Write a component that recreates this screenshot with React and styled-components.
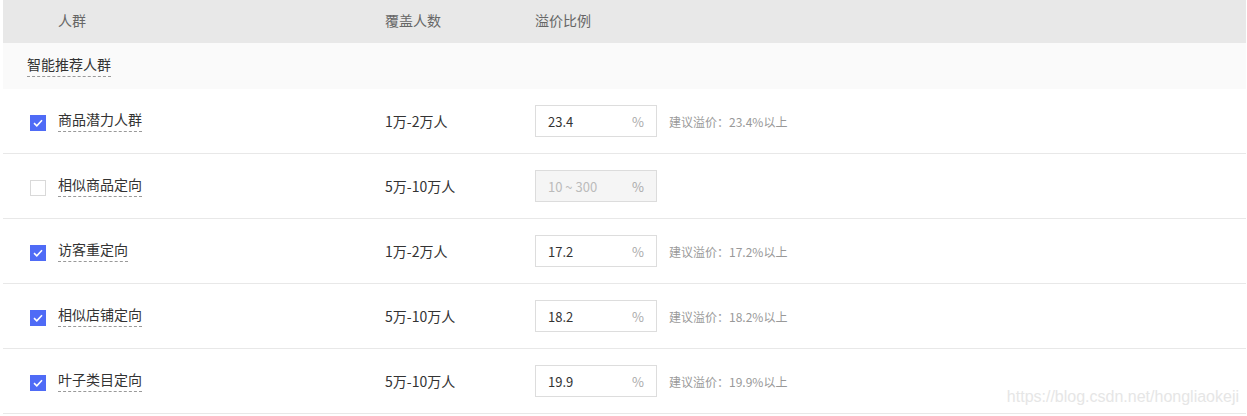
import React from "react";
import styled, { createGlobalStyle } from "styled-components";

const Global = createGlobalStyle`
  html, body { margin: 0; padding: 0; background: #fff; }
  body { font-family: "Noto Sans CJK SC", "Microsoft YaHei", sans-serif; }
`;

const Page = styled.div`
  position: relative;
  width: 1247px;
  height: 416px;
  padding-left: 3px;
  box-sizing: border-box;
  overflow: hidden;
`;

const Table = styled.div`
  width: 1243px;
`;

const cols = "382px 150px 1fr";

const HeaderRow = styled.div`
  display: grid;
  grid-template-columns: ${cols};
  height: 43px;
  align-items: center;
  background: #e8e8e8;
  color: #666;
  font-size: 14px;
`;

const HeadCell = styled.div`
  padding-left: ${(p) => p.$pad || 0}px;
  line-height: 1;
  margin-top: -4px;
`;

const SectionRow = styled.div`
  height: 46px;
  background: #fafafa;
  display: flex;
  align-items: center;
  padding-left: 24px;
`;

const Dashed = styled.span`
  font-size: 14px;
  color: #333;
  line-height: 19px;
  padding-bottom: 2px;
  border-bottom: 1px dashed #999;
`;

const Row = styled.div`
  display: grid;
  grid-template-columns: ${cols};
  height: 64px;
  align-items: center;
  border-bottom: 1px solid #e8e8e8;
  font-size: 14px;
  color: #333;
`;

const NameCell = styled.div`
  display: flex;
  align-items: center;
  padding-left: 27px;
  gap: 12px;
`;

const Check = styled.span`
  width: 16px;
  height: 16px;
  box-sizing: border-box;
  display: inline-flex;
  align-items: center;
  justify-content: center;
  margin-top: 4px;
  background: ${(p) => (p.$on ? "#4f6bf6" : "#fff")};
  border: 1px solid ${(p) => (p.$on ? "#4f6bf6" : "#d9d9d9")};
`;

const Cover = styled.div`
  line-height: 1;
`;

const PriceCell = styled.div`
  display: flex;
  align-items: center;
  gap: 12px;
`;

const Input = styled.div`
  width: 122px;
  height: 32px;
  box-sizing: border-box;
  border: 1px solid ${(p) => (p.$disabled ? "#dcdcdc" : "#ddd")};
  background: ${(p) => (p.$disabled ? "#f5f5f5" : "#fff")};
  display: flex;
  align-items: center;
  justify-content: space-between;
  padding: 0 12px 0 12px;
  font-size: 13px;
  color: ${(p) => (p.$disabled ? "#bbb" : "#333")};
`;

const Unit = styled.span`
  color: #aaa;
`;

const Hint = styled.span`
  font-size: 12px;
  color: #999;
`;

const Watermark = styled.div`
  position: absolute;
  right: 8px;
  top: 388px;
  font-family: "Liberation Sans", Arial, sans-serif;
  font-size: 16px;
  color: #e6e6e6;
`;

const CheckIcon = () => (
  <svg width="10" height="8" viewBox="0 0 10 8">
    <path d="M1 4.2 L3.8 6.8 L9 1.2" fill="none" stroke="#fff" strokeWidth="1.6" />
  </svg>
);

const rows = [
  { name: "商品潜力人群", cover: "1万-2万人", value: "23.4", on: true },
  { name: "相似商品定向", cover: "5万-10万人", value: null, on: false },
  { name: "访客重定向", cover: "1万-2万人", value: "17.2", on: true },
  { name: "相似店铺定向", cover: "5万-10万人", value: "18.2", on: true },
  { name: "叶子类目定向", cover: "5万-10万人", value: "19.9", on: true },
];

export default function App() {
  return (
    <Page>
      <Global />
      <Table>
        <HeaderRow>
          <HeadCell $pad={55}>人群</HeadCell>
          <HeadCell>覆盖人数</HeadCell>
          <HeadCell>溢价比例</HeadCell>
        </HeaderRow>
        <SectionRow>
          <Dashed>智能推荐人群</Dashed>
        </SectionRow>
        {rows.map((r) => (
          <Row key={r.name}>
            <NameCell>
              <Check $on={r.on}>{r.on && <CheckIcon />}</Check>
              <Dashed>{r.name}</Dashed>
            </NameCell>
            <Cover>{r.cover}</Cover>
            <PriceCell>
              {r.value ? (
                <>
                  <Input>
                    <span>{r.value}</span>
                    <Unit>%</Unit>
                  </Input>
                  <Hint>建议溢价：{r.value}%以上</Hint>
                </>
              ) : (
                <Input $disabled>
                  <span>10 ~ 300</span>
                  <Unit>%</Unit>
                </Input>
              )}
            </PriceCell>
          </Row>
        ))}
      </Table>
      <Watermark>https://blog.csdn.net/hongliaokeji</Watermark>
    </Page>
  );
}
